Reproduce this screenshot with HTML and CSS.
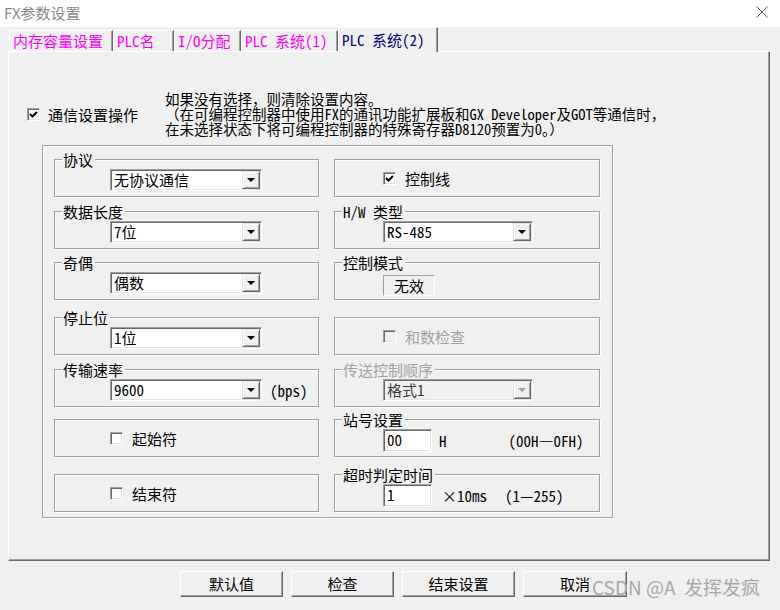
FILE: index.html
```html
<!DOCTYPE html>
<html lang="zh-CN">
<head>
<meta charset="utf-8">
<title>FX参数设置</title>
<link rel="stylesheet" href="styles.css">
</head>
<body>
<div class="titlebar">
  <span class="title">FX参数设置</span>
  <svg class="close" width="12" height="12" viewBox="0 0 12 12"><path d="M0.5 0.5 L11.5 11.5 M11.5 0.5 L0.5 11.5" stroke="#555" stroke-width="1" fill="none"/></svg>
</div>
<div class="tabs">
  <div class="tab t1">内存容量设置</div>
  <div class="tab t2">PLC名</div>
  <div class="tab t3">I/O分配</div>
  <div class="tab t4">PLC 系统(1)</div>
  <div class="tab t5 sel">PLC 系统(2)</div>
</div>
<div class="panel">
  <div class="top-row">
    <div class="opt"><span class="cb"><svg width="9" height="9" viewBox="0 0 9 9"><path d="M1 4 L3.5 6.5 L8 2" stroke="#000" stroke-width="2" fill="none"/></svg></span><span>通信设置操作</span></div>
    <div class="desc">如果没有选择，则清除设置内容。<br>（在可编程控制器中使用FX的通讯功能扩展板和GX Developer及GOT等通信时，<br>在未选择状态下将可编程控制器的特殊寄存器D8120预置为0。）</div>
  </div>
  <div class="outer">
    <div class="grid">
      <div class="box">
        <div class="legend">协议</div>
        <div class="row left"><div class="combo w152"><span class="val">无协议通信</span><span class="btn"><i class="tri"></i></span></div></div>
      </div>
      <div class="box center">
        <div class="cbrow right"><span class="cb"><svg width="9" height="9" viewBox="0 0 9 9"><path d="M1 4 L3.5 6.5 L8 2" stroke="#000" stroke-width="2" fill="none"/></svg></span><span>控制线</span></div>
      </div>

      <div class="box">
        <div class="legend">数据长度</div>
        <div class="row left"><div class="combo w152"><span class="val">7位</span><span class="btn"><i class="tri"></i></span></div></div>
      </div>
      <div class="box">
        <div class="legend">H/W 类型</div>
        <div class="row right"><div class="combo w150"><span class="val">RS-485</span><span class="btn"><i class="tri"></i></span></div></div>
      </div>

      <div class="box">
        <div class="legend">奇偶</div>
        <div class="row left"><div class="combo w152"><span class="val">偶数</span><span class="btn"><i class="tri"></i></span></div></div>
      </div>
      <div class="box">
        <div class="legend">控制模式</div>
        <div class="row right static-row"><div class="static">无效</div></div>
      </div>

      <div class="box">
        <div class="legend">停止位</div>
        <div class="row left"><div class="combo w152"><span class="val">1位</span><span class="btn"><i class="tri"></i></span></div></div>
      </div>
      <div class="box center">
        <div class="cbrow right disabled"><span class="cb off"></span><span>和数检查</span></div>
      </div>

      <div class="box">
        <div class="legend">传输速率</div>
        <div class="row left"><div class="combo w152"><span class="val">9600</span><span class="btn"><i class="tri"></i></span></div><span class="unit">(bps)</span></div>
      </div>
      <div class="box">
        <div class="legend disabled">传送控制顺序</div>
        <div class="row right"><div class="combo w150 dis"><span class="val">格式1</span><span class="btn"><i class="tri"></i></span></div></div>
      </div>

      <div class="box center">
        <div class="cbrow left"><span class="cb"></span><span>起始符</span></div>
      </div>
      <div class="box">
        <div class="legend">站号设置</div>
        <div class="row right"><div class="field">00</div><span class="suf1">H</span><span class="rng1">(00H—0FH)</span></div>
      </div>

      <div class="box center">
        <div class="cbrow left"><span class="cb"></span><span>结束符</span></div>
      </div>
      <div class="box">
        <div class="legend">超时判定时间</div>
        <div class="row right"><div class="field">1</div><span class="suf2">×10ms</span><span class="rng2">(1—255)</span></div>
      </div>
    </div>
  </div>
</div>
<div class="buttons">
  <div class="b w103">默认值</div>
  <div class="b w103">检查</div>
  <div class="b w113">结束设置</div>
  <div class="b w104">取消</div>
</div>
<div class="watermark">CSDN @A&nbsp;&nbsp;发挥发疯</div>
</body>
</html>
```
FILE: styles.css
```css
body {
  margin: 0;
  width: 780px;
  height: 610px;
  background: #f0f0f0;
  font-family: "Noto Sans Mono CJK SC", "Noto Sans CJK SC", sans-serif;
  font-size: 15px;
  line-height: 15px;
  color: #000;
  position: relative;
  overflow: hidden;
}

.titlebar {
  height: 27px;
  background: #fff;
  display: flex;
  align-items: center;
  padding-left: 4px;
  box-sizing: border-box;
}
.title {
  font-family: "Noto Sans CJK SC", sans-serif;
  font-size: 15px;
  color: #8a8a8a;
  margin-top: -3px;
}
.close {
  margin-left: auto;
  margin-right: 12px;
  margin-top: -3px;
}

.tabs {
  height: 24px;
  display: flex;
  align-items: flex-end;
  padding-left: 9px;
  position: relative;
  z-index: 1;
}
.tab {
  height: 21px;
  box-sizing: border-box;
  border-top: 1px solid #fff;
  border-left: 1px solid #fff;
  border-right: 1px solid #696969;
  box-shadow: inset -1px 0 #a0a0a0;
  color: #ff00ff;
  padding-left: 3px;
  line-height: 19px;
  white-space: nowrap;
  background: #f0f0f0;
}
.t1 { width: 104px; }
.t2 { width: 61px; }
.t3 { width: 67px; }
.t4 { width: 97px; }
.t5 { width: 100px; }
.tab.sel {
  height: 25px;
  margin-bottom: -1px;
  padding-top: 2px;
  color: #000080;
}

.panel {
  margin-left: 8px;
  width: 762px;
  height: 510px;
  box-sizing: border-box;
  border-top: 1px solid #fff;
  border-left: 1px solid #fff;
  border-right: 1px solid #696969;
  border-bottom: 1px solid #696969;
  box-shadow: inset -1px -1px #a0a0a0;
  padding: 39px 0 0 18px;
}

.top-row {
  display: flex;
  align-items: center;
}
.opt {
  width: 138px;
  display: flex;
  align-items: center;
  gap: 8px;
  margin-top: 2px;
}
.desc {
  font-size: 14.5px;
  line-height: 15px;
  white-space: nowrap;
}

.outer {
  margin: 9px 0 0 15px;
  width: 571px;
  height: 373px;
  box-sizing: border-box;
  border: 1px solid #a0a0a0;
  box-shadow: inset 1px 1px #fff, 1px 1px #fff;
  padding: 13px 0 0 11px;
}
.grid {
  display: grid;
  grid-template-columns: 265px 266px;
  column-gap: 15px;
  grid-template-rows: 52px 51px 55px 52px 50px 55px 38px;
}
.box {
  height: 38px;
  box-sizing: border-box;
  border: 1px solid #a0a0a0;
  box-shadow: inset 1px 1px #fff, 1px 1px #fff;
}
.box.center {
  display: flex;
  align-items: center;
}
.legend {
  width: fit-content;
  margin: -8px 0 0 7px;
  padding: 0 2px 0 1px;
  background: #f0f0f0;
  line-height: 15px;
}
.disabled { color: #a0a0a0; }

.row {
  display: flex;
  align-items: center;
  margin-top: 2px;
}
.row.left, .cbrow.left { margin-left: 55px; }
.row.right, .cbrow.right { margin-left: 48px; }
.static-row { margin-top: 5px; }

.combo {
  height: 22px;
  box-sizing: border-box;
  border: 1px solid;
  border-color: #a0a0a0 #fff #fff #a0a0a0;
  box-shadow: inset 1px 1px #696969, inset -1px -1px #e3e3e3;
  background: #fff;
  display: flex;
  align-items: stretch;
  padding: 1px;
}
.w152 { width: 152px; }
.w150 { width: 150px; }
.combo .val {
  flex: 1;
  padding-left: 2px;
  line-height: 18px;
  white-space: nowrap;
}
.combo .btn {
  width: 18px;
  box-sizing: border-box;
  border: 1px solid;
  border-color: #e3e3e3 #696969 #696969 #e3e3e3;
  box-shadow: inset 1px 1px #fff, inset -1px -1px #a0a0a0;
  background: #f0f0f0;
  display: flex;
  align-items: center;
  justify-content: center;
}
.tri {
  display: block;
  width: 0;
  height: 0;
  border-left: 4px solid transparent;
  border-right: 4px solid transparent;
  border-top: 4px solid #000;
}
.combo.dis { background: #f0f0f0; }
.combo.dis .val { color: #3c3c3c; }
.combo.dis .tri { border-top-color: #a0a0a0; }

.unit { margin-left: 8px; }

.static {
  width: 52px;
  height: 21px;
  box-sizing: border-box;
  border: 1px solid;
  border-color: #a0a0a0 #fff #fff #a0a0a0;
  text-align: center;
  line-height: 19px;
}

.field {
  width: 49px;
  height: 23px;
  box-sizing: border-box;
  border: 1px solid;
  border-color: #a0a0a0 #fff #fff #a0a0a0;
  box-shadow: inset 1px 1px #696969, inset -1px -1px #e3e3e3;
  background: #fff;
  padding-left: 3px;
  line-height: 19px;
}
.suf1 { margin-left: 7px; }
.rng1 { margin-left: 62px; }
.suf2 { margin-left: 10px; }
.rng2 { margin-left: 18px; }

.cbrow {
  display: flex;
  align-items: center;
  gap: 9px;
}
.cb {
  width: 13px;
  height: 13px;
  box-sizing: border-box;
  border: 1px solid;
  border-color: #a0a0a0 #fff #fff #a0a0a0;
  box-shadow: inset 1px 1px #696969, inset -1px -1px #e3e3e3;
  background: #fff;
  display: flex;
  align-items: center;
  justify-content: center;
  flex: none;
}
.cb.off { background: #f0f0f0; }

.buttons {
  display: flex;
  gap: 8px;
  margin: 10px 0 0 180px;
}
.b {
  height: 26px;
  box-sizing: border-box;
  border: 1px solid;
  border-color: #fff #696969 #696969 #fff;
  box-shadow: inset -1px -1px #a0a0a0;
  background: #f0f0f0;
  text-align: center;
  line-height: 24px;
}
.w103 { width: 103px; }
.w113 { width: 113px; }
.w104 { width: 104px; }

.watermark {
  position: absolute;
  left: 592px;
  top: 575px;
  font-family: "Noto Sans CJK SC", sans-serif;
  font-size: 19px;
  line-height: 24px;
  color: #a8a8a8;
  white-space: nowrap;
}
```
